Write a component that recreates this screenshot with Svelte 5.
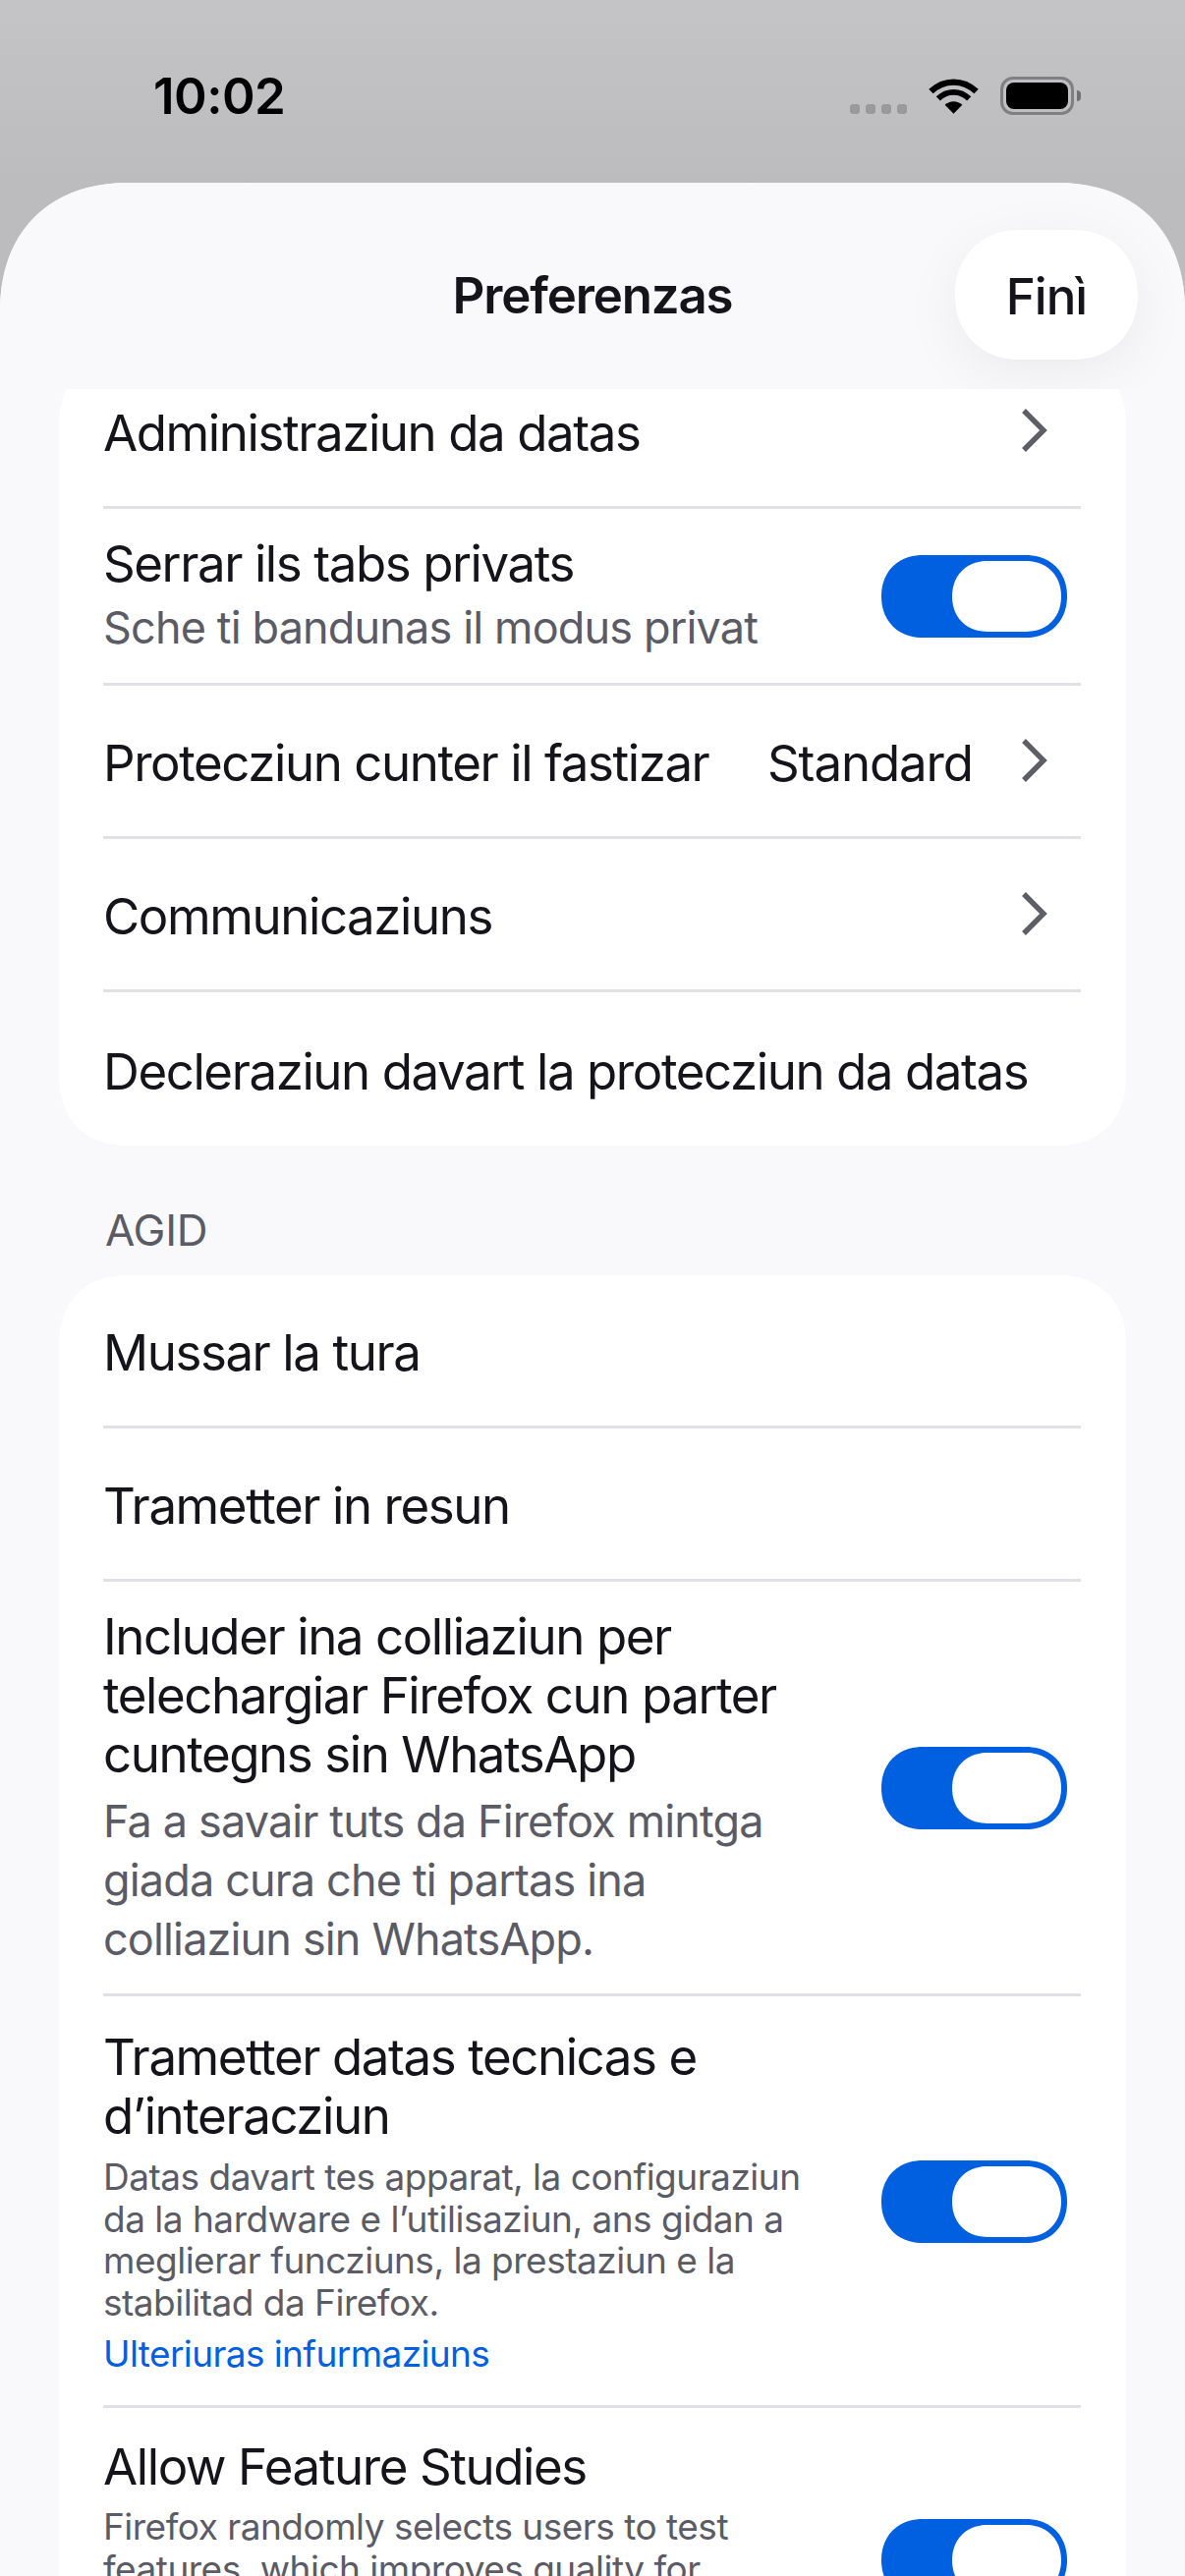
<script>
  const card1 = [
    { title: 'Serrar ils tabs privats', sub: 'Sche ti bandunas il modus privat', toggle: true },
    { title: 'Protecziun cunter il fastizar', value: 'Standard', chev: true },
    { title: 'Communicaziuns', chev: true },
    { title: 'Decleraziun davart la protecziun da datas' },
  ];
</script>

{#snippet chevron()}
  <svg class="chev" width="32" height="50" viewBox="0 0 32 50" aria-hidden="true">
    <path d="M8 5 L28 25 L8 45" fill="none" stroke="#5e5e66" stroke-width="5.4" />
  </svg>
{/snippet}

{#snippet toggle()}
  <span class="toggle"><span class="knob"></span></span>
{/snippet}

<div class="screen">
  <div class="status">
    <span class="time">10:02</span>
    <div class="status-icons">
      <span class="dots"><i></i><i></i><i></i><i></i></span>
      <svg width="51" height="38" viewBox="0 0 52 38" aria-hidden="true">
        <path d="M26 37 L17 28 C22 23 30 23 35 28 Z" fill="#000"/>
        <path d="M10 21.5 C19 12.5 33 12.5 42 21.5" fill="none" stroke="#000" stroke-width="6"/>
        <path d="M2.5 14 C16 1 36 1 49.5 14" fill="none" stroke="#000" stroke-width="6.4"/>
      </svg>
      <span class="battery"><span class="fill"></span></span>
    </div>
  </div>

  <div class="sheet">
    <header class="nav">
      <h1>Preferenzas</h1>
      <button class="done">Finì</button>
    </header>

    <main class="scroll">
      <section class="card">
        <div class="row simple">
          <span class="title">Administraziun da datas</span>
          {@render chevron()}
        </div>
        {#each card1 as r}
          <div class="row {r.sub ? 'sub-row' : 'simple'}">
            <div class="text">
              <span class="title">{r.title}</span>
              {#if r.sub}<span class="sub">{r.sub}</span>{/if}
            </div>
            {#if r.value}<span class="value">{r.value}</span>{/if}
            {#if r.chev}{@render chevron()}{/if}
            {#if r.toggle}{@render toggle()}{/if}
          </div>
        {/each}
      </section>

      <h2>AGID</h2>
      <section class="card">
        <div class="row simple"><span class="title">Mussar la tura</span></div>
        <div class="row simple"><span class="title">Trametter in resun</span></div>
        <div class="row long">
          <div class="text narrow">
            <span class="title">Includer ina colliaziun per telechargiar Firefox cun parter cuntegns sin WhatsApp</span>
            <span class="sub">Fa a savair tuts da Firefox mintga giada cura che ti partas ina colliaziun sin WhatsApp.</span>
          </div>
          {@render toggle()}
        </div>
        <div class="row small">
          <div class="text narrow">
            <span class="title">Trametter datas tecnicas e d’interacziun</span>
            <span class="fine">Datas davart tes apparat, la configuraziun da la hardware e l’utilisaziun, ans gidan a meglierar funcziuns, la prestaziun e la stabilitad da Firefox.</span>
            <span class="link">Ulteriuras infurmaziuns</span>
          </div>
          {@render toggle()}
        </div>
        <div class="row small last">
          <div class="text narrow">
            <span class="title">Allow Feature Studies</span>
            <span class="fine">Firefox randomly selects users to test features, which improves quality for everyone.</span>
            <span class="link">Learn More</span>
          </div>
          {@render toggle()}
        </div>
      </section>
    </main>
  </div>
</div>

<style>
  :global(body) { margin: 0; background: #f9f9fb; }
  .screen {
    width: 1206px; height: 2622px; overflow: hidden; position: relative;
    background: linear-gradient(#c4c4c6, #bcbcbe 186px);
    font-family: Inter, "Noto Sans", sans-serif;
    display: flex; flex-direction: column;
  }
  .status {
    height: 186px; flex: none; display: flex; justify-content: space-between;
    padding: 68px 113px 0 156px; box-sizing: border-box;
  }
  .time { font-size: 51px; font-weight: 600; line-height: 60px; color: #000; letter-spacing: -0.5px; height: 60px; }
  .status-icons { display: flex; align-items: flex-start; height: 40px; margin-top: 10px; }
  .dots { display: flex; gap: 6px; margin-top: 28px; margin-right: 22px; }
  .dots i { width: 10px; height: 10px; border-radius: 3px; background: #9a9a9c; }
  .status-icons svg { margin-right: 22px; margin-top: 1px; }
  .battery {
    width: 75px; height: 39px; box-sizing: border-box; border: 3px solid #808082; border-radius: 13px;
    padding: 3px; position: relative;
  }
  .battery::after {
    content: ""; position: absolute; right: -10px; top: 11px; width: 4px; height: 11px;
    background: #707072; border-radius: 0 6px 6px 0;
  }
  .fill { display: block; width: 100%; height: 100%; background: #000; border-radius: 8px; }
  .sheet {
    flex: 1; min-height: 0; background: #f9f9fb;
    clip-path: path('M0 130 C0 50 50 0 130 0 L1076 0 C1156 0 1206 50 1206 130 L1206 2436 L0 2436 Z');
    overflow: hidden; position: relative; display: flex; flex-direction: column;
  }
  .nav { height: 210px; flex: none; position: relative; z-index: 2; background: #f9f9fb; overflow: hidden; }
  .nav h1 {
    margin: 0; text-align: center; font-size: 51px; font-weight: 600; line-height: 60px; color: #15141a;
    padding-top: 85px; letter-spacing: -1.15px;
  }
  .done {
    position: absolute; left: 972px; top: 48px; width: 186px; height: 132px; border: 0; border-radius: 66px;
    background: #fff; color: #15141a; font: 500 51px Inter, sans-serif; letter-spacing: -1px; padding: 3px 0 0;
    box-shadow: 0 14px 60px rgba(0,0,0,.06);
  }
  .scroll { padding: 0 60px; margin-top: -34px; }
  .card { background: #fff; border-radius: 72px; padding-left: 45px; padding-right: 46px; }
  .row {
    display: flex; align-items: center; border-bottom: 3px solid #e0e0e6; box-sizing: border-box;
  }
  .row:last-child { border-bottom: 0; }
  .simple { height: 156px; padding-top: 5px; }
  .sub-row { height: 180px; }
  .text { flex: 1; min-width: 0; display: flex; flex-direction: column; }
  .narrow { flex: none; width: 740px; }
  .title { font-size: 51px; line-height: 60px; color: #15141a; letter-spacing: -1.42px; }
  .sub { font-size: 45px; line-height: 60px; color: #5b5b66; letter-spacing: -.85px; margin-top: 5px; }
  .long .sub { margin-top: 8px; }
  .fine { font-size: 37px; line-height: 42.6px; color: #5b5b66; letter-spacing: -.5px; margin-top: 11px; }
  .link { font-size: 37px; line-height: 43px; color: #0060df; letter-spacing: -.6px; margin-top: 9px; }
  .value { font-size: 51px; line-height: 60px; color: #15141a; letter-spacing: -1.1px; margin-right: 44px; }
  .chev { flex: none; margin: -7px 34px 0 auto; }
  .value + .chev { margin-left: 0; }
  .long { padding: 26px 0 25px; }
  .small { padding: 32px 0 31px; }
  .last { padding-top: 30px; }
  .last .fine { margin-top: 10px; }
  .toggle {
    flex: none; margin-left: auto; margin-right: 14px; width: 189px; height: 84px; border-radius: 42px;
    background: #0060df; position: relative; display: block;
  }
  .knob {
    position: absolute; right: 6px; top: 6px; width: 111px; height: 72px; border-radius: 36px; background: #fff;
  }
  h2 {
    margin: 0; font-size: 44px; font-weight: 400; line-height: 50px; color: #5b5b66; letter-spacing: -.25px;
    padding: 61px 0 21px 47px;
  }
  @supports (corner-shape: squircle) {
    .done, .toggle, .knob { corner-shape: superellipse(1.1); }
    .card { corner-shape: superellipse(1.2); }
  }
</style>
